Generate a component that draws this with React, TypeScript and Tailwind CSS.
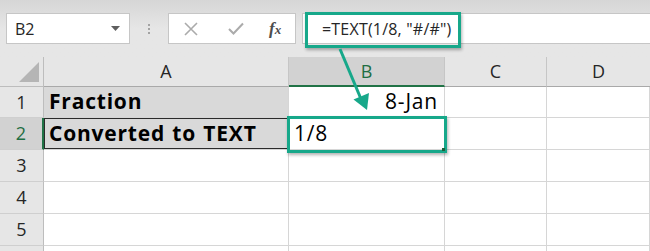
import React from 'react'

const TEAL = '#17a88a'

function RowHeader({ n, active }: { n?: number; active?: boolean }) {
  return (
    <div
      className={`flex items-center justify-center text-[18px] border-b border-[#cfcfcf] ${
        active
          ? 'bg-[#d2d2d2] text-[#1f6e43] border-r-2 border-r-[#217346]'
          : 'bg-[#e6e6e6] text-[#262626] border-r border-r-[#bdbdbd]'
      }`}
    >
      {n}
    </div>
  )
}

function Cell({ children, className = '' }: { children?: React.ReactNode; className?: string }) {
  return (
    <div className={`flex items-center border-r border-b border-[#d6d6d6] bg-white ${className}`}>
      {children}
    </div>
  )
}

export default function App() {
  const cellFont =
    "font-['Open_Sans',sans-serif] text-[21px] tracking-[0.8px] [word-spacing:1px] text-black whitespace-nowrap"
  return (
    <div className="relative w-[650px] h-[251px] overflow-hidden bg-[#e6e6e6] font-['Open_Sans',sans-serif]">
      {/* Formula bar */}
      <div className="h-[57px] bg-gradient-to-b from-[#d6d6d6] via-[#e6e6e6] to-[#e6e6e6] pt-[13px] flex items-start">
        <div className="ml-[6px] w-[124px] h-[31px] bg-white border border-[#c6c6c6] flex items-center justify-between pl-[8px] pr-[9px]">
          <span className="text-[16px] text-[#262626]">B2</span>
          <svg width="9" height="5" viewBox="0 0 9 5">
            <path d="M0 0h9L4.5 5z" fill="#5f5f5f" />
          </svg>
        </div>
        <div className="w-[38px] h-[31px] flex flex-col items-center justify-center gap-[2px]">
          <span className="w-[2px] h-[2px] bg-[#a3a3a3]" />
          <span className="w-[2px] h-[2px] bg-[#a3a3a3]" />
          <span className="w-[2px] h-[2px] bg-[#a3a3a3]" />
        </div>
        <div className="w-[128px] h-[31px] bg-white border border-[#c6c6c6] flex items-center">
          <svg width="14" height="14" viewBox="0 0 14 14" className="ml-[15px]">
            <path d="M1 1l12 12M13 1L1 13" stroke="#ababab" strokeWidth="1.6" />
          </svg>
          <svg width="16" height="13" viewBox="0 0 16 13" className="ml-[30px]">
            <path d="M1 7l4.5 4.5L15 1.5" stroke="#ababab" strokeWidth="2" fill="none" />
          </svg>
          <span className="ml-[25px] font-['Liberation_Serif',serif] italic font-bold text-[17px] text-[#4d4d4d] leading-none">
            f<span className="text-[13px]">x</span>
          </span>
        </div>
        <div className="ml-[6px] flex-1 h-[31px] bg-white border border-[#c6c6c6] border-r-0 flex items-center pl-[19px] text-[16px] tracking-[0.2px] text-[#262626]">
          =TEXT(1/8, "#/#")
        </div>
      </div>

      {/* Sheet grid */}
      <div className="grid grid-cols-[44px_245px_156px_102px_1fr] grid-rows-[30px_31px_32px_32px_32px_32px_32px]">
        {/* corner */}
        <div className="relative bg-[#e6e6e6] border-r border-b border-[#bdbdbd]">
          <svg width="20" height="20" viewBox="0 0 20 20" className="absolute right-[4px] bottom-[4px]">
            <path d="M20 0V20H0z" fill="#b5b5b5" />
          </svg>
        </div>
        <div className="flex items-center justify-center bg-[#e6e6e6] border-r border-[#c6c6c6] border-b border-b-[#a9a9a9] text-[18px] text-[#262626]">
          A
        </div>
        <div className="flex items-center justify-center bg-[#d2d2d2] border-r border-[#c6c6c6] border-b-2 border-b-[#217346] text-[18px] text-[#1f6e43]">
          B
        </div>
        <div className="flex items-center justify-center bg-[#e6e6e6] border-r border-[#c6c6c6] border-b border-b-[#a9a9a9] text-[18px] text-[#262626]">
          C
        </div>
        <div className="flex items-center justify-center bg-[#e6e6e6] border-b border-b-[#a9a9a9] text-[18px] text-[#262626]">
          D
        </div>

        {/* row 1 */}
        <RowHeader n={1} />
        <Cell className={`!bg-[#d9d9d9] pl-[5px] font-bold ${cellFont}`}>Fraction</Cell>
        <Cell className={`justify-end pr-[6px] ${cellFont}`}>8-Jan</Cell>
        <Cell />
        <Cell />

        {/* row 2 */}
        <RowHeader n={2} active />
        <Cell className={`!bg-[#d9d9d9] shadow-[inset_0_0_0_1px_#2b2b2b] pl-[5px] font-bold ${cellFont}`}>
          Converted to TEXT
        </Cell>
        <Cell className={`pl-[5px] ${cellFont}`}>1/8</Cell>
        <Cell />
        <Cell />

        {[3, 4, 5].map((n) => (
          <React.Fragment key={n}>
            <RowHeader n={n} />
            <Cell />
            <Cell />
            <Cell />
            <Cell />
          </React.Fragment>
        ))}
        {/* row 6, only its top edge shows */}
        <RowHeader />
        <Cell />
        <Cell />
        <Cell />
        <Cell />
      </div>

      {/* Annotations */}
      <div
        className="absolute left-[305px] top-[12px] w-[156px] h-[36px] border-[3px] shadow-[1px_2px_3px_rgba(0,0,0,0.3)]"
        style={{ borderColor: TEAL }}
      />
      <div
        className="absolute left-[287px] top-[116px] w-[160px] h-[37px] border-[3px] shadow-[1px_2px_3px_rgba(0,0,0,0.3)]"
        style={{ borderColor: TEAL }}
      >
        <span className="absolute right-[-1px] bottom-[-1px] w-[3px] h-[3px] bg-[#1f5e3a]" />
      </div>
      <svg className="absolute left-0 top-0" width="650" height="251" viewBox="0 0 650 251">
        <line x1="340" y1="49" x2="361" y2="99" stroke={TEAL} strokeWidth="3" />
        <path d="M367 110L353.5 99.5L369 93z" fill={TEAL} />
      </svg>
    </div>
  )
}
